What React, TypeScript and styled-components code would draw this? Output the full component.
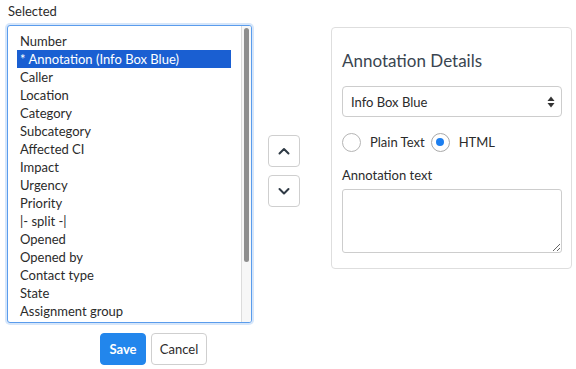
import React, { useState } from 'react'
import styled, { createGlobalStyle } from 'styled-components'

const GlobalStyle = createGlobalStyle`
  body {
    margin: 0;
    background: #fff;
    font-family: Lato, 'Noto Sans', 'Liberation Sans', sans-serif;
    color: #2b2b2b;
  }
`

const Page = styled.div`
  display: flex;
  align-items: flex-start;
  padding: 3px 0 0 7px;
  width: 576px;
  height: 369px;
  box-sizing: border-box;
`

const LeftSection = styled.div`
  display: flex;
  flex-direction: column;
  align-items: center;
  width: 293px;
`

const ListRow = styled.div`
  display: flex;
  align-self: stretch;
  align-items: flex-start;
  gap: 16px;
`

const ListColumn = styled.div`
  display: flex;
  flex-direction: column;
`

const FieldLabel = styled.div`
  font-size: 13px;
  line-height: 16px;
  padding-left: 1px;
  margin-bottom: 6px;
`

const ListBox = styled.div`
  display: flex;
  width: 245px;
  height: 298px;
  box-sizing: border-box;
  border: 1px solid #5a9cec;
  border-radius: 3px;
  box-shadow: 0 0 0 2px rgba(90, 156, 236, 0.25);
  background: #fff;
  overflow: hidden;
`

const Options = styled.div`
  flex: 1;
  padding: 6px 0 0 9px;
  overflow-y: auto;
  scrollbar-width: none;
`

const ScrollTrack = styled.div`
  width: 10px;
  flex: none;
  background: #f7f7f7;
  border-left: 1px solid #dcdcdc;
  padding: 2px 2px 0 2px;
  box-sizing: border-box;
`

const ScrollThumb = styled.div`
  height: 234px;
  border-radius: 3px;
  background: #8e8e8e;
`

const Option = styled.div<{ $selected?: boolean }>`
  width: 214px;
  height: 18px;
  line-height: 18px;
  font-size: 13px;
  padding-left: 3px;
  box-sizing: border-box;
  white-space: nowrap;
  background: ${(p) => (p.$selected ? '#1a5fd2' : 'transparent')};
  color: ${(p) => (p.$selected ? '#fff' : '#2b2b2b')};
`

const MoveButtons = styled.div`
  display: flex;
  flex-direction: column;
  gap: 8px;
  margin-top: 132px;
`

const IconButton = styled.button`
  width: 32px;
  height: 32px;
  padding: 0;
  display: flex;
  align-items: center;
  justify-content: center;
  background: #fff;
  border: 1px solid #cfcfcf;
  border-radius: 4px;
  color: #2f3a45;
`

const Actions = styled.div`
  display: flex;
  gap: 5px;
  margin-top: 10px;
`

const Button = styled.button<{ $primary?: boolean; $width: number }>`
  width: ${(p) => p.$width}px;
  height: 32px;
  padding: 0;
  font-family: inherit;
  font-size: 13px;
  font-weight: ${(p) => (p.$primary ? 700 : 400)};
  border-radius: 4px;
  border: 1px solid ${(p) => (p.$primary ? '#2286ec' : '#cfcfcf')};
  background: ${(p) => (p.$primary ? '#2286ec' : '#fff')};
  color: ${(p) => (p.$primary ? '#fff' : '#2b2b2b')};
`

const Panel = styled.div`
  margin-left: 31px;
  margin-top: 24px;
  width: 241px;
  height: 242px;
  box-sizing: border-box;
  border: 1px solid #dedede;
  border-radius: 4px;
  padding: 21px 10px 0 10px;
`

const PanelTitle = styled.h3`
  margin: 0 0 13px;
  font-size: 17px;
  font-weight: 400;
  line-height: 24px;
  color: #3a4550;
`

const SelectBox = styled.div`
  position: relative;
  height: 31px;
  width: 220px;
  box-sizing: border-box;
  border: 1px solid #cdcdcd;
  border-radius: 4px;
  display: flex;
  align-items: center;
  padding-left: 8px;
  font-size: 13px;
`

const SelectArrows = styled.svg`
  position: absolute;
  right: 6px;
  top: 9px;
`

const RadioRow = styled.div`
  display: flex;
  align-items: center;
  margin-top: 15px;
  height: 20px;
`

const RadioCircle = styled.span<{ $checked?: boolean }>`
  width: 19px;
  height: 19px;
  box-sizing: border-box;
  border-radius: 50%;
  border: 1px solid ${(p) => (p.$checked ? '#a9a9a9' : '#b5b5b5')};
  display: flex;
  align-items: center;
  justify-content: center;

  &::after {
    content: '';
    display: ${(p) => (p.$checked ? 'block' : 'none')};
    width: 8px;
    height: 8px;
    border-radius: 50%;
    background: #1d7ff0;
  }
`

const RadioLabel = styled.span`
  font-size: 13px;
  margin: 0 6px 0 9px;
`

const TextLabel = styled.div`
  font-size: 13px;
  margin-top: 15px;
  line-height: 16px;
`

const TextArea = styled.textarea`
  display: block;
  margin-top: 6px;
  width: 220px;
  height: 64px;
  box-sizing: border-box;
  border: 1px solid #cdcdcd;
  border-radius: 3px;
  font-family: inherit;
  resize: vertical;
`

const fields = [
  'Number',
  '* Annotation (Info Box Blue)',
  'Caller',
  'Location',
  'Category',
  'Subcategory',
  'Affected CI',
  'Impact',
  'Urgency',
  'Priority',
  '|- split -|',
  'Opened',
  'Opened by',
  'Contact type',
  'State',
  'Assignment group',
  'Assigned to',
]

const App = () => {
  const [selected, setSelected] = useState(1)
  const [mode, setMode] = useState('html')

  return (
    <Page>
      <GlobalStyle />
      <LeftSection>
        <ListRow>
          <ListColumn>
            <FieldLabel>Selected</FieldLabel>
            <ListBox role="listbox">
              <Options>
                {fields.map((f, i) => (
                  <Option key={f} $selected={i === selected} onClick={() => setSelected(i)}>
                    {f}
                  </Option>
                ))}
              </Options>
              <ScrollTrack>
                <ScrollThumb />
              </ScrollTrack>
            </ListBox>
          </ListColumn>
          <MoveButtons>
            <IconButton aria-label="Move up">
              <svg width="14" height="14" viewBox="0 0 14 14">
                <path d="M2.5 9.5 L7 5 L11.5 9.5" fill="none" stroke="currentColor" strokeWidth="2" strokeLinecap="round" strokeLinejoin="round" />
              </svg>
            </IconButton>
            <IconButton aria-label="Move down">
              <svg width="14" height="14" viewBox="0 0 14 14">
                <path d="M2.5 5 L7 9.5 L11.5 5" fill="none" stroke="currentColor" strokeWidth="2" strokeLinecap="round" strokeLinejoin="round" />
              </svg>
            </IconButton>
          </MoveButtons>
        </ListRow>
        <Actions>
          <Button $primary $width={46}>Save</Button>
          <Button $width={56}>Cancel</Button>
        </Actions>
      </LeftSection>

      <Panel>
        <PanelTitle>Annotation Details</PanelTitle>
        <SelectBox>
          Info Box Blue
          <SelectArrows width="8" height="12" viewBox="0 0 8 12">
            <path d="M4 0.5 L7.5 5 L0.5 5 Z" fill="#333" />
            <path d="M4 11.5 L7.5 7 L0.5 7 Z" fill="#333" />
          </SelectArrows>
        </SelectBox>
        <RadioRow>
          <RadioCircle $checked={mode === 'plain'} onClick={() => setMode('plain')} />
          <RadioLabel>Plain Text</RadioLabel>
          <RadioCircle $checked={mode === 'html'} onClick={() => setMode('html')} />
          <RadioLabel>HTML</RadioLabel>
        </RadioRow>
        <TextLabel>Annotation text</TextLabel>
        <TextArea />
      </Panel>
    </Page>
  )
}

export default App
